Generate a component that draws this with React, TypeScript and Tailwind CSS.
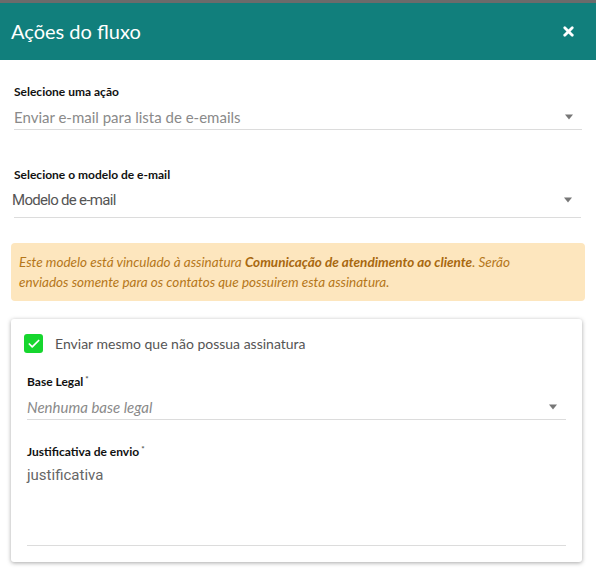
import { Check, X } from "lucide-react";

const pt = { fontFamily: "Lato, 'Noto Sans', sans-serif" };
const roboto = { fontFamily: "Roboto, sans-serif" };

const Caret = () => (
  <svg width="10" height="6" viewBox="0 0 10 6" className="shrink-0 mb-[8px]">
    <path d="M1 0.5 L9 0.5 L5 5.5 Z" fill="#777" />
  </svg>
);

interface FieldProps {
  label: string;
  value: string;
  required?: boolean;
  italic?: boolean;
}

const Label = ({ text, required }: { text: string; required?: boolean }) => (
  <label className="text-[12px] font-bold text-[#111] leading-4" style={pt}>
    {text}
    {required && <sup className="ml-[2px] text-[8px] text-[#555]">*</sup>}
  </label>
);

const SelectField = ({ label, value, required, italic }: FieldProps) => (
  <div className="flex flex-col">
    <Label text={label} required={required} />
    <div className="flex items-end justify-between border-b border-[#dcdcdc] h-[30px] pb-[1px] pr-2">
      <span className={`text-[15px] leading-[22px] text-[#8a8a8a] ${italic ? "italic" : ""}`}>
        {value}
      </span>
      <Caret />
    </div>
  </div>
);

export default function App() {
  return (
    <div className="w-[596px] h-[578px] bg-white overflow-hidden" style={pt}>
      <div className="h-[3px] bg-[#6b6b6b]" />
      <div className="h-[57px] bg-[#117f7c] flex items-center justify-between pl-[11px] pr-[20px]">
        <h1 className="text-[20px] text-white leading-none -mt-[2px]">Ações do fluxo</h1>
        <X className="text-white w-[15px] h-[15px] -mt-[1px]" strokeWidth={4.5} />
      </div>

      <div className="px-[11px] pt-[24px]">
        <div className="px-[3px]">
          <SelectField label="Selecione uma ação" value="Enviar e-mail para lista de e-emails" />
        </div>

        <div className="mt-[37px] pl-[3px] pr-[4px] flex flex-col">
          <Label text="Selecione o modelo de e-mail" />
          <div className="flex items-center justify-between border-b border-[#dcdcdc] h-[35px] pr-2">
            <span className="text-[15px] tracking-[-0.7px] text-[#555] -ml-[2px]" style={roboto}>
              Modelo de e-mail
            </span>
            <svg width="10" height="6" viewBox="0 0 10 6" className="shrink-0">
              <path d="M1 0.5 L9 0.5 L5 5.5 Z" fill="#777" />
            </svg>
          </div>
        </div>

        <div className="mt-[25px] rounded-[4px] bg-[#fde6be] px-[8px] py-[9px] text-[13.5px] italic text-[#b5771a] leading-[20px]">
          Este modelo está vinculado à assinatura{" "}
          <b className="font-bold text-[#a8680f]">Comunicação de atendimento ao cliente</b>. Serão
          <br />
          enviados somente para os contatos que possuirem esta assinatura.
        </div>

        <div className="mt-[18px] mr-[3px] rounded-[3px] bg-white shadow-[0_1px_4px_rgba(0,0,0,0.35)] px-[16px] pt-[14px] pb-[16px]">
          <div className="flex items-center gap-[12px] -ml-[3px]">
            <div className="w-[19px] h-[19px] rounded-[3px] bg-[#16d62e] flex items-center justify-center">
              <Check className="text-white w-[14px] h-[14px]" strokeWidth={3} />
            </div>
            <span className="text-[14px] text-[#555]">Enviar mesmo que não possua assinatura</span>
          </div>

          <div className="mt-[20px]">
            <SelectField label="Base Legal" value="Nenhuma base legal" required italic />
          </div>

          <div className="mt-[24px] flex flex-col">
            <Label text="Justificativa de envio" required />
            <div className="h-[86px] border-b border-[#dcdcdc] pt-[4px] text-[15px] text-[#666]" style={roboto}>
              justificativa
            </div>
          </div>
        </div>
      </div>
    </div>
  );
}
